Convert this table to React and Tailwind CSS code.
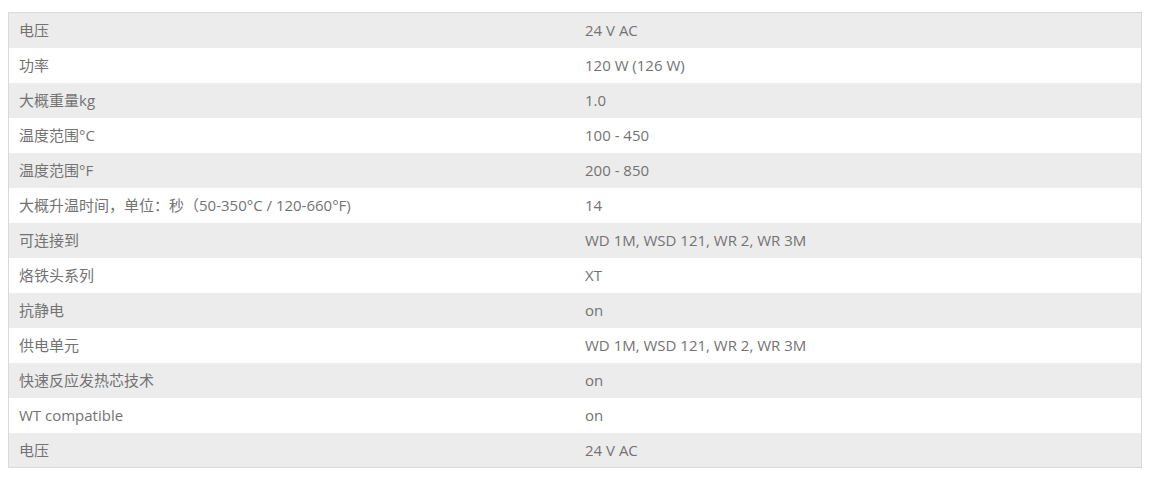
const ROWS = [
  ['电压', '24 V AC'],
  ['功率', '120 W (126 W)'],
  ['大概重量kg', '1.0'],
  ['温度范围°C', '100 - 450'],
  ['温度范围°F', '200 - 850'],
  ['大概升温时间，单位：秒（50-350°C / 120-660°F)', '14'],
  ['可连接到', 'WD 1M, WSD 121, WR 2, WR 3M'],
  ['烙铁头系列', 'XT'],
  ['抗静电', 'on'],
  ['供电单元', 'WD 1M, WSD 121, WR 2, WR 3M'],
  ['快速反应发热芯技术', 'on'],
  ['WT compatible', 'on'],
  ['电压', '24 V AC'],
];

export default function App() {
  return (
    <div className="min-h-screen bg-white pt-[12px] pl-[8px] font-['Open_Sans','Noto_Sans_CJK_SC',sans-serif]">
      <table className="w-[1134px] table-fixed border border-[#d9d9d9] border-collapse text-[15px] text-[#737373]">
        <tbody>
          {ROWS.map(([k, v], i) => (
            <tr key={i} className={i % 2 === 0 ? 'bg-[#ececec]' : 'bg-white'}>
              <td className="h-[35px] px-[10px] align-middle">{k}</td>
              <td className="h-[35px] px-[10px] align-middle">{v}</td>
            </tr>
          ))}
        </tbody>
      </table>
    </div>
  );
}
